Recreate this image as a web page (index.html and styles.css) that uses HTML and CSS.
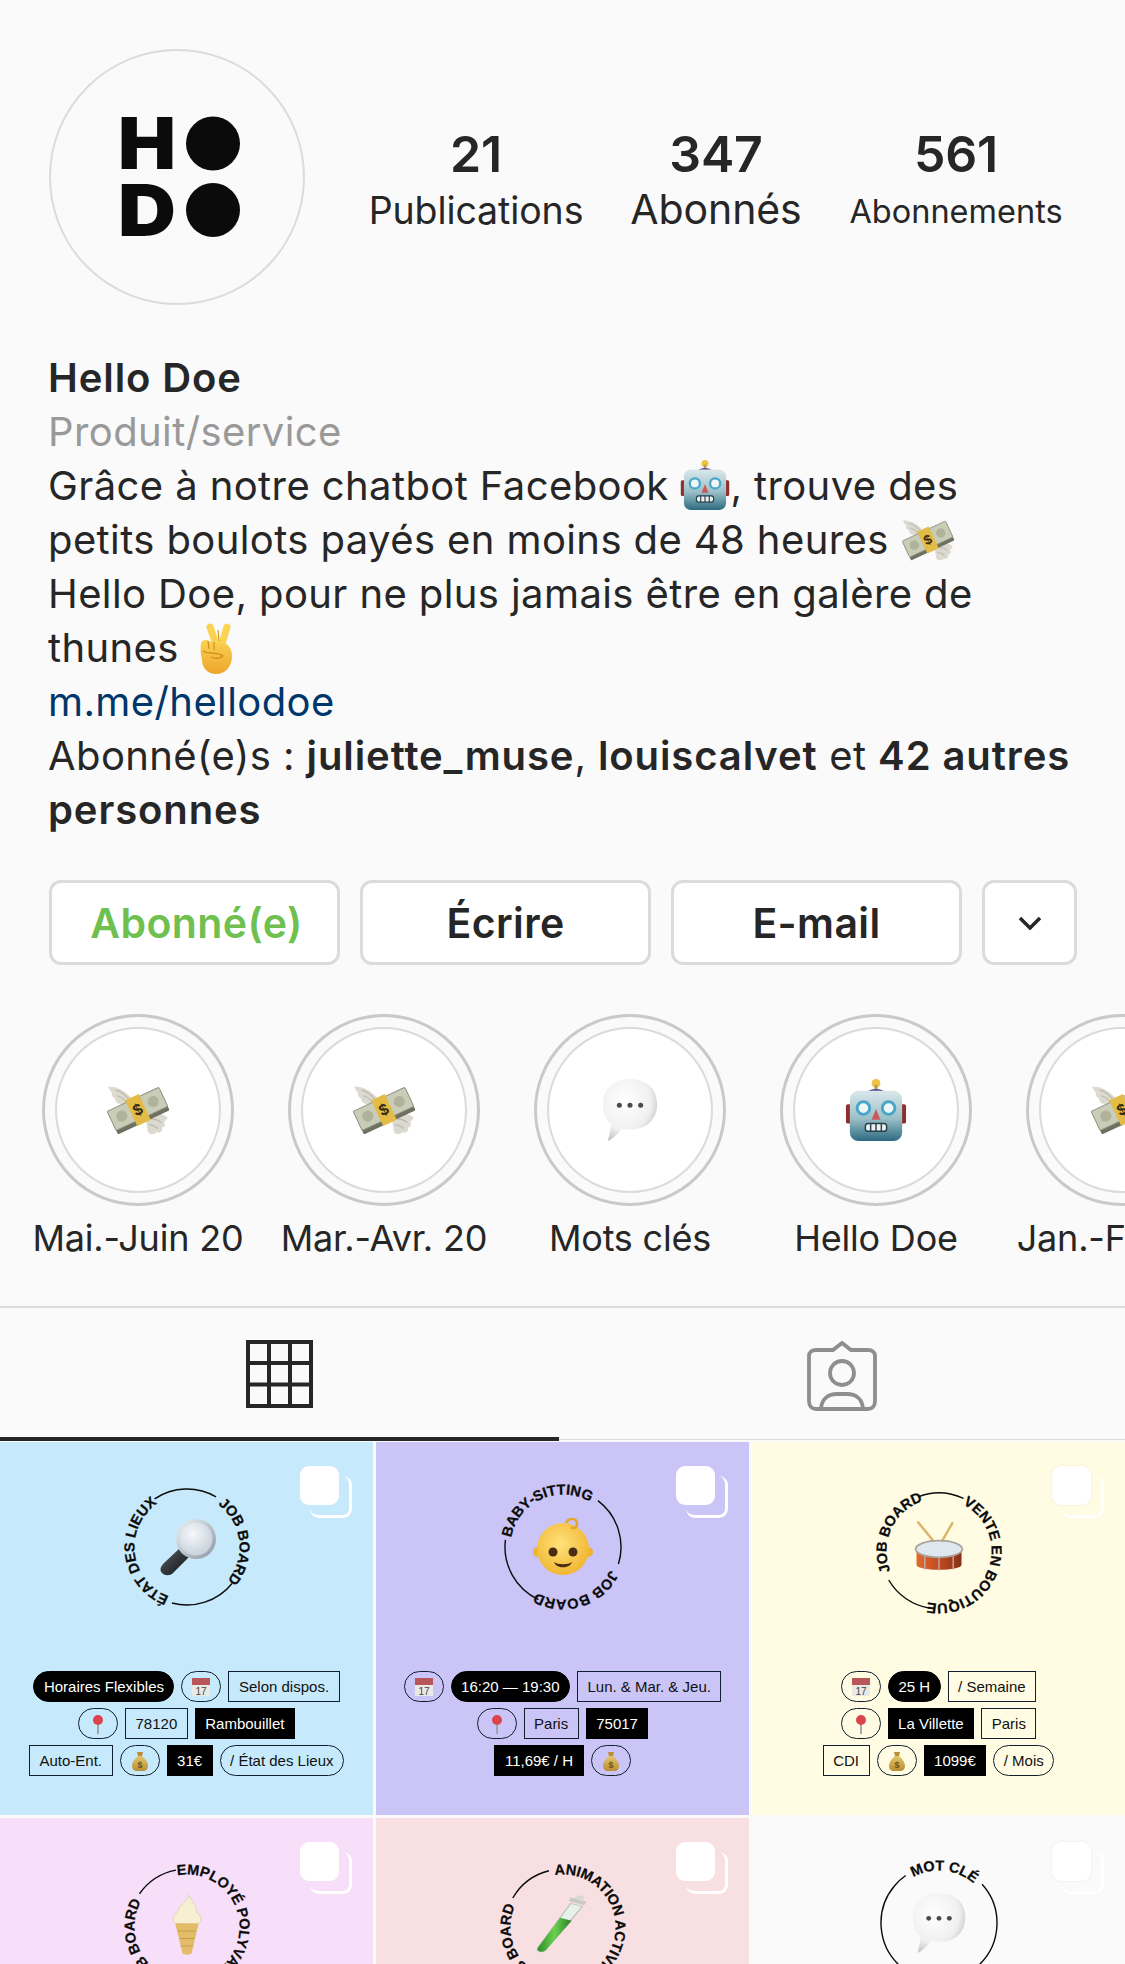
FILE: index.html
```
<!DOCTYPE html>
<html lang="fr">
<head>
<meta charset="utf-8">
<title>Hello Doe</title>
<link rel="stylesheet" href="styles.css">
</head>
<body>
<svg class="sprite" aria-hidden="true">
  <defs>
    <linearGradient id="gRobot" x1="0" y1="0" x2="0" y2="1"><stop offset="0" stop-color="#dbe8eb"/><stop offset=".55" stop-color="#9cc0c8"/><stop offset="1" stop-color="#2b6a80"/></linearGradient>
    <radialGradient id="gBubble" cx=".4" cy=".35" r=".8"><stop offset="0" stop-color="#ffffff"/><stop offset=".6" stop-color="#f0f0f0"/><stop offset="1" stop-color="#adadad"/></radialGradient>
    <radialGradient id="gLens" cx=".4" cy=".35" r=".7"><stop offset="0" stop-color="#f6f8fa"/><stop offset="1" stop-color="#c5d0da"/></radialGradient>
    <linearGradient id="gRim" x1="0" y1="0" x2="1" y2="1"><stop offset="0" stop-color="#eef3f6"/><stop offset="1" stop-color="#8c96a0"/></linearGradient>
    <linearGradient id="gHandle" x1="0" y1="0" x2="1" y2="1"><stop offset="0" stop-color="#5a6068"/><stop offset="1" stop-color="#0d0f12"/></linearGradient>
    <radialGradient id="gBaby" cx=".45" cy=".4" r=".65"><stop offset="0" stop-color="#ffe27a"/><stop offset="1" stop-color="#f0b32e"/></radialGradient>
    <linearGradient id="gDrum" x1="0" y1="0" x2="1" y2="0"><stop offset="0" stop-color="#e06a30"/><stop offset=".5" stop-color="#c24a22"/><stop offset="1" stop-color="#8a2f15"/></linearGradient>
    <linearGradient id="gHand" x1="0" y1="0" x2="0" y2="1"><stop offset="0" stop-color="#fbd252"/><stop offset="1" stop-color="#eda52a"/></linearGradient>
    <linearGradient id="gBag" x1="0" y1="0" x2="0" y2="1"><stop offset="0" stop-color="#e4c56c"/><stop offset="1" stop-color="#b98e35"/></linearGradient>
    <linearGradient id="gTube" x1="0" y1="0" x2="1" y2="0"><stop offset="0" stop-color="#2f8f2a"/><stop offset=".5" stop-color="#6bd04f"/><stop offset="1" stop-color="#2a7f26"/></linearGradient>
    <path id="ct" d="M0,-52.500 A52.500,52.500 0 1 1 -0.01,-52.500"/>
    <path id="cb" d="M0,52.500 A52.500,52.500 0 1 1 0.01,52.500"/>

    <symbol id="money" viewBox="0 0 100 100">
      <path d="M44 38 C36 22 18 12 2 12 C4 18 6 20 8 22 C7 26 9 30 13 31 C13 36 17 40 22 40 C25 46 32 48 38 48Z" fill="#dcdad0"/>
      <path d="M14 18 C22 20 30 26 36 34 M16 27 C22 28 28 33 32 38" stroke="#bdbaac" stroke-width="2" fill="none"/>
      <path d="M62 60 C72 52 86 54 98 62 C96 66 94 68 92 68 C95 73 93 78 89 78 C90 84 86 88 80 86 C76 90 70 90 66 86Z" fill="#dcdad0"/>
      <path d="M70 64 C76 64 82 66 88 70 M68 74 C72 74 78 76 82 80" stroke="#bdbaac" stroke-width="2" fill="none"/>
      <g transform="rotate(-25 50 50)">
        <rect x="4" y="36" width="92" height="36" rx="2" fill="#6e7160"/>
        <rect x="4" y="31" width="92" height="34" rx="2" fill="#c9ccb6" stroke="#8f9280" stroke-width="1.500"/>
        <ellipse cx="22" cy="48" rx="9" ry="9" fill="#b0b39a"/>
        <ellipse cx="78" cy="48" rx="9" ry="9" fill="#b0b39a"/>
        <rect x="38" y="27" width="24" height="46" rx="1" fill="#e3bb45"/>
        <text x="50" y="58" class="glyph money-sign" font-size="26">$</text>
      </g>
    </symbol>

    <symbol id="robot" viewBox="0 0 64 64">
      <circle cx="32" cy="4.500" r="4.500" fill="#efc144"/>
      <rect x="30.500" y="6" width="3" height="5" fill="#b79a52"/>
      <path d="M23 14 C24 9 40 9 41 14Z" fill="#5a4a92"/>
      <rect x="1" y="26" width="6" height="20" rx="2" fill="#8f2d2d"/>
      <rect x="57" y="26" width="6" height="20" rx="2" fill="#8f2d2d"/>
      <rect x="5" y="12" width="54" height="52" rx="9" fill="url(#gRobot)"/>
      <circle cx="19" cy="30" r="6.500" fill="#eef6f8" stroke="#47a7c9" stroke-width="3"/>
      <circle cx="45" cy="30" r="6.500" fill="#eef6f8" stroke="#47a7c9" stroke-width="3"/>
      <path d="M32 31 L36.500 42 L27.500 42Z" fill="#c95a5a"/>
      <rect x="21" y="46" width="22" height="8" rx="3" fill="#eef0f0" stroke="#26414c" stroke-width="1.500"/>
      <path d="M26.500 46v8M32 46v8M37.500 46v8" stroke="#26414c" stroke-width="1.500"/>
    </symbol>

    <symbol id="bubble" viewBox="0 0 64 64">
      <path d="M32 0 C50 0 60 11 60 26 C60 41 50 52 32 52 C29 52 26 51.600 24 51 C20 56 14 62 9 64 C11 58 12 52 12 46 C6 41 4 34 4 26 C4 11 14 0 32 0Z" fill="url(#gBubble)"/>
      <circle cx="21" cy="27" r="2.600" fill="#4a4a4a"/><circle cx="32" cy="27" r="2.600" fill="#4a4a4a"/><circle cx="43" cy="27" r="2.600" fill="#4a4a4a"/>
    </symbol>

    <symbol id="peace" viewBox="0 0 34 51">
      <path d="M11 4 L18 24" stroke="#fbd252" stroke-width="7" stroke-linecap="round"/>
      <path d="M28 4 L22 24" stroke="#fbd252" stroke-width="7" stroke-linecap="round"/>
      <path d="M2 21 C2 17 8 16 10 18 L14 19 L22 19 C28 20 33 24 33 33 C33 44 26 51 17 51 C9 51 3 45 3 37 C2 33 1 26 2 21Z" fill="url(#gHand)"/>
      <path d="M9 18 L10 26 M15 19 L15 27 M4 28 C10 32 18 28 24 33 C20 36 16 36 12 34 M19 7 L20 18" stroke="#cf8d1c" stroke-width="1.100" fill="none"/>
    </symbol>

    <symbol id="lens" viewBox="0 0 60 60">
      <path d="M6 46 L22 31 C24 29 27 29 29 31 L31 33 C33 35 33 38 31 40 L15 56 C12 59 7 59 4 56 C1 53 3 49 6 46Z" fill="url(#gHandle)"/>
      <circle cx="38" cy="22" r="20" fill="url(#gRim)"/>
      <circle cx="38" cy="22" r="16.500" fill="url(#gLens)"/>
    </symbol>

    <symbol id="baby" viewBox="0 0 60 60">
      <circle cx="5" cy="34" r="5" fill="#f0b32e"/><circle cx="55" cy="34" r="5" fill="#f0b32e"/>
      <circle cx="30" cy="31" r="26" fill="url(#gBaby)"/>
      <path d="M33 5 C36 -1 44 0 44 6 C44 10 40 11 38 9" stroke="#e6a62a" stroke-width="2.600" fill="none"/>
      <circle cx="20" cy="34" r="4.500" fill="#4a2d12"/><circle cx="40" cy="34" r="4.500" fill="#4a2d12"/>
      <path d="M21 44 C25 47 35 47 39 44 C37 51 23 51 21 44Z" fill="#4a2d12"/>
    </symbol>

    <symbol id="drum" viewBox="0 0 60 60">
      <path d="M5 1 L27 28 M46 2 L31 28" stroke="#dcb56a" stroke-width="3" stroke-linecap="round"/>
      <path d="M3 34 L3 52 C3 60 57 60 57 52 L57 34Z" fill="url(#gDrum)"/>
      <path d="M13 40v18M30 42v17M47 40v18" stroke="#b9b2aa" stroke-width="1.600"/>
      <ellipse cx="30" cy="33" rx="28" ry="10" fill="#dfe8ee" stroke="#a9a39b" stroke-width="2"/>
    </symbol>

    <symbol id="cal" viewBox="0 0 20 20">
      <rect x="1" y="1" width="18" height="18" fill="#e9e9e6"/>
      <rect x="1" y="1" width="18" height="7" fill="#b8565a"/>
      <text x="10" y="17.500" class="glyph cal-num" font-size="10">17</text>
    </symbol>

    <symbol id="pin" viewBox="0 0 20 20">
      <path d="M10 8v12" stroke="#9aa0a6" stroke-width="1.800"/>
      <circle cx="10" cy="6" r="5" fill="#d9454a"/>
    </symbol>

    <symbol id="bag" viewBox="0 0 20 20">
      <path d="M7 1 L13 1 L12 5 L8 5Z" fill="#b98e35"/>
      <path d="M8 5 L12 5 C16 8 18 12 18 15 C18 18 16 20 13 20 L7 20 C4 20 2 18 2 15 C2 12 4 8 8 5Z" fill="url(#gBag)"/>
      <text x="10" y="16.500" class="glyph bag-num" font-size="9">$</text>
    </symbol>

    <symbol id="cone" viewBox="0 0 40 80" preserveAspectRatio="none">
      <path d="M22 0 C24 8 32 14 30 22 C36 26 37 34 33 38 L7 38 C3 34 4 26 10 22 C10 14 20 10 22 0Z" fill="#f6efd2" stroke="#dcd2a8" stroke-width="1"/>
      <path d="M7 38 L33 38 L25 78 C24 80 16 80 15 78Z" fill="#e2bc68"/>
      <path d="M10 48H30M12 58H28M13 68H27" stroke="#c59d4a" stroke-width="1.500"/>
    </symbol>

    <symbol id="tube" viewBox="0 0 60 100" preserveAspectRatio="none">
      <path d="M12 92 C8 97 2 94 4 88 L38 14 L50 19Z" fill="#e8f0ea" stroke="#b9c6bc" stroke-width="1.500"/>
      <path d="M12 92 C8 97 2 94 4 88 L27 38 L39 43Z" fill="url(#gTube)"/>
      <path d="M36 10 L52 17 L54 11 L38 4Z" fill="#c9c9c4"/>
      <path d="M42 6 L46 0 L52 3 L50 11Z" fill="#d8d8d2"/>
    </symbol>
  </defs>
</svg>

<main class="page">
  <section class="header">
    <div class="avatar">
      <svg class="logo" viewBox="0 0 120 120">
        <text x="-2" y="52" class="logo-letter" textLength="58" lengthAdjust="spacingAndGlyphs">H</text>
        <circle cx="93" cy="26.500" r="27"/>
        <text x="-2" y="119" class="logo-letter" textLength="58" lengthAdjust="spacingAndGlyphs">D</text>
        <circle cx="93" cy="93" r="27"/>
      </svg>
    </div>
    <div class="stats">
      <div class="stat"><b class="num">21</b><span class="lab lab-a">Publications</span></div>
      <div class="stat"><b class="num">347</b><span class="lab lab-b">Abonnés</span></div>
      <div class="stat"><b class="num">561</b><span class="lab lab-c">Abonnements</span></div>
    </div>
  </section>

  <section class="bio">
    <div class="strong">Hello Doe</div>
    <div class="muted">Produit/service</div>
    <div>Grâce à notre chatbot Facebook <svg class="emo emo-robot"><use href="#robot"/></svg>, trouve des<br>petits boulots payés en moins de 48 heures <svg class="emo emo-money"><use href="#money"/></svg><br>Hello Doe, pour ne plus jamais être en galère de thunes <svg class="emo emo-peace"><use href="#peace"/></svg></div>
    <div class="link">m.me/hellodoe</div>
    <div>Abonné(e)s : <span class="strong">juliette_muse</span>, <span class="strong">louiscalvet</span> et <span class="strong">42 autres personnes</span></div>
  </section>

  <section class="actions">
    <button class="btn btn-follow">Abonné(e)</button>
    <button class="btn">Écrire</button>
    <button class="btn">E-mail</button>
    <button class="btn btn-more" aria-label="Plus">
      <svg class="chev" viewBox="0 0 24 14"><path d="M2 2 L12 12 L22 2"/></svg>
    </button>
  </section>

  <section class="stories">
    <div class="story"><div class="ring"><div class="disc"><svg class="story-ico"><use href="#money"/></svg></div></div><span class="story-name">Mai.-Juin 20</span></div>
    <div class="story"><div class="ring"><div class="disc"><svg class="story-ico"><use href="#money"/></svg></div></div><span class="story-name">Mar.-Avr. 20</span></div>
    <div class="story"><div class="ring"><div class="disc"><svg class="story-ico"><use href="#bubble"/></svg></div></div><span class="story-name">Mots clés</span></div>
    <div class="story"><div class="ring"><div class="disc"><svg class="story-ico"><use href="#robot"/></svg></div></div><span class="story-name">Hello Doe</span></div>
    <div class="story"><div class="ring"><div class="disc"><svg class="story-ico"><use href="#money"/></svg></div></div><span class="story-name">Jan.-Fév. 20</span></div>
  </section>

  <nav class="tabs">
    <div class="tab tab-on">
      <svg class="tab-ico-grid" viewBox="0 0 67 68"><path d="M2 2H65V66H2ZM23 2V66M44 2V66M2 23H65M2 44.500H65"/></svg>
    </div>
    <div class="tab">
      <svg class="tab-ico-tag" viewBox="0 0 70 70"><path d="M9 9H26L35 2L44 9H61C65 9 68 11 68 15V60C68 65 65 68 61 68H9C5 68 2 65 2 60V15C2 11 5 9 9 9Z"/><circle cx="35" cy="32" r="12"/><path d="M14 67C15 58 21 53 30 53H40C49 53 55 58 56 67"/></svg>
    </div>
  </nav>

  <section class="feed">
    <article class="tile t-blue">
      <span class="multi"></span>
      <svg class="seal" viewBox="-75 -75 150 150">
        <circle class="seal-line" r="58" pathLength="360" stroke-dasharray="64 360" transform="rotate(-124)"/>
        <circle class="seal-line" r="58" pathLength="360" stroke-dasharray="66 360" transform="rotate(39)"/>
        <text class="seal-text"><textPath href="#ct" startOffset="10%">JOB BOARD</textPath></text>
        <text class="seal-text"><textPath href="#ct" startOffset="55.500%">ÉTAT DES LIEUX</textPath></text>
        <use href="#lens" x="-29" y="-30" width="60" height="60"/>
      </svg>
      <div class="chips">
        <div class="row"><span class="chip pill ink">Horaires Flexibles</span><span class="chip pill ico"><svg class="mini"><use href="#cal"/></svg></span><span class="chip">Selon dispos.</span></div>
        <div class="row"><span class="chip pill ico"><svg class="mini"><use href="#pin"/></svg></span><span class="chip">78120</span><span class="chip ink">Rambouillet</span></div>
        <div class="row"><span class="chip">Auto-Ent.</span><span class="chip pill ico"><svg class="mini"><use href="#bag"/></svg></span><span class="chip ink">31€</span><span class="chip pill">/ État des Lieux</span></div>
      </div>
    </article>

    <article class="tile t-violet">
      <span class="multi"></span>
      <svg class="seal" viewBox="-75 -75 150 150">
        <circle class="seal-line" r="58" pathLength="360" stroke-dasharray="70 360" transform="rotate(-53)"/>
        <circle class="seal-line" r="58" pathLength="360" stroke-dasharray="72 360" transform="rotate(115)"/>
        <text class="seal-text"><textPath href="#cb" startOffset="27.800%">BABY-SITTING</textPath></text>
        <text class="seal-text"><textPath href="#ct" startOffset="32.200%">JOB BOARD</textPath></text>
        <use href="#baby" x="-30" y="-29" width="60" height="60"/>
      </svg>
      <div class="chips">
        <div class="row"><span class="chip pill ico"><svg class="mini"><use href="#cal"/></svg></span><span class="chip pill ink">16:20 — 19:30</span><span class="chip">Lun. &amp; Mar. &amp; Jeu.</span></div>
        <div class="row"><span class="chip pill ico"><svg class="mini"><use href="#pin"/></svg></span><span class="chip">Paris</span><span class="chip ink">75017</span></div>
        <div class="row"><span class="chip ink">11,69€ / H</span><span class="chip pill ico"><svg class="mini"><use href="#bag"/></svg></span></div>
      </div>
    </article>

    <article class="tile t-cream">
      <span class="multi multi-soft"></span>
      <svg class="seal seal-low" viewBox="-75 -75 150 150">
        <circle class="seal-line" r="58" pathLength="360" stroke-dasharray="46 360" transform="rotate(-111)"/>
        <circle class="seal-line" r="58" pathLength="360" stroke-dasharray="51 360" transform="rotate(99)"/>
        <text class="seal-text"><textPath href="#ct" startOffset="7.500%">VENTE EN BOUTIQUE</textPath></text>
        <text class="seal-text"><textPath href="#ct" startOffset="68.800%">JOB BOARD</textPath></text>
        <use href="#drum" x="-25" y="-32" width="50" height="55"/>
      </svg>
      <div class="chips">
        <div class="row"><span class="chip pill ico"><svg class="mini"><use href="#cal"/></svg></span><span class="chip pill ink">25 H</span><span class="chip">/ Semaine</span></div>
        <div class="row"><span class="chip pill ico"><svg class="mini"><use href="#pin"/></svg></span><span class="chip ink">La Villette</span><span class="chip">Paris</span></div>
        <div class="row"><span class="chip">CDI</span><span class="chip pill ico"><svg class="mini"><use href="#bag"/></svg></span><span class="chip ink">1099€</span><span class="chip pill">/ Mois</span></div>
      </div>
    </article>

    <article class="tile t-pink">
      <span class="multi"></span>
      <svg class="seal seal-low" viewBox="-75 -75 150 150">
        <circle class="seal-line" r="58" pathLength="360" stroke-dasharray="44 360" transform="rotate(-145)"/>
        <text class="seal-text"><textPath href="#cb" startOffset="47%">EMPLOYÉ POLYVALENT</textPath></text>
        <text class="seal-text"><textPath href="#ct" startOffset="57%">JOB BOARD</textPath></text>
        <use href="#cone" x="-18" y="-32" width="36" height="60"/>
      </svg>
    </article>

    <article class="tile t-rose">
      <span class="multi"></span>
      <svg class="seal seal-low" viewBox="-75 -75 150 150">
        <circle class="seal-line" r="58" pathLength="360" stroke-dasharray="46 360" transform="rotate(-150)"/>
        <text class="seal-text"><textPath href="#cb" startOffset="47.500%">ANIMATION ACTIVITÉS</textPath></text>
        <text class="seal-text"><textPath href="#ct" startOffset="55.500%">JOB BOARD</textPath></text>
        <use href="#tube" x="-29" y="-32" width="58" height="60"/>
      </svg>
    </article>

    <article class="tile t-white">
      <span class="multi multi-soft"></span>
      <svg class="seal" viewBox="-75 -75 150 150">
        <circle class="seal-line" r="58" pathLength="360" stroke-dasharray="130 360" transform="rotate(-42)"/>
        <circle class="seal-line" r="58" pathLength="360" stroke-dasharray="105 360" transform="rotate(130)"/>
        <text class="seal-text"><textPath href="#cb" startOffset="41.800%">MOT CLÉ</textPath></text>
        <use href="#bubble" x="-30" y="-30" width="60" height="60"/>
      </svg>
    </article>
  </section>
</main>
</body>
</html>
```

FILE: styles.css
```
* { box-sizing: border-box; }
html, body { margin: 0; height: 1964px; overflow: hidden; background: #fafafa; }
body { font-family: Inter, "Noto Sans", sans-serif; color: #262626; }
.sprite { position: absolute; width: 0; height: 0; }
.page { width: 1125px; height: 1964px; overflow: hidden; }

.header { display: flex; align-items: center; padding: 49px 49px 0; }
.avatar { flex: none; width: 256px; height: 256px; border-radius: 50%; border: 2px solid #dbdbdb; display: flex; align-items: center; justify-content: center; }
.logo { width: 120px; height: 120px; margin-left: 6px; overflow: visible; }
.logo-letter { font-family: Inter, sans-serif; font-weight: 900; font-size: 71px; fill: #0b0b0b; }
.logo circle { fill: #0b0b0b; }
.stats { display: flex; margin-left: 51px; padding-top: 10px; }
.stat { width: 240px; display: flex; flex-direction: column; align-items: center; }
.num { font-size: 50px; font-weight: 600; line-height: 56px; letter-spacing: -.2px; }
.lab { line-height: 52px; height: 52px; white-space: nowrap; letter-spacing: -.1px; }
.lab-a { font-size: 37.500px; margin-top: 3px; }
.lab-b { font-size: 41px; margin-top: 1px; }
.lab-c { font-size: 32.500px; margin-top: 4px; letter-spacing: 0; }

.bio { margin-top: 46px; padding: 0 40px 0 48px; font-size: 40px; line-height: 54px; letter-spacing: .4px; }
.strong { font-weight: 600; letter-spacing: .9px; }
.muted { color: #999; letter-spacing: .4px; }
.link { color: #00376b; }
.emo { display: inline-block; vertical-align: middle; }
.emo-robot { width: 50px; height: 50px; margin-top: -8px; }
.emo-money { width: 56px; height: 52px; margin-top: -6px; }
.emo-peace { width: 34px; height: 51px; margin: -6px 0 0 8px; }

.actions { display: flex; gap: 20px; margin-top: 43px; padding: 0 49px; }
.btn { width: 291px; height: 85px; flex: none; border: 3px solid #dbdbdb; border-radius: 12px; background: #fff; font-family: inherit; font-size: 41px; font-weight: 600; color: #262626; padding: 0; letter-spacing: .4px; }
.btn-follow { color: #70c050; padding-left: 4px; }
.btn-more { width: 95px; display: flex; align-items: center; justify-content: center; }
.chev { width: 24px; height: 14px; fill: none; stroke: #262626; stroke-width: 3.500; }

.stories { display: flex; gap: 54px; margin-top: 49px; padding-left: 42px; width: 1125px; overflow: hidden; }
.story { flex: none; width: 192px; display: flex; flex-direction: column; align-items: center; }
.ring { width: 192px; height: 192px; border-radius: 50%; border: 3px solid #c9c9c9; display: flex; align-items: center; justify-content: center; }
.disc { width: 166px; height: 166px; border-radius: 50%; border: 2px solid #dbdbdb; background: #fff; display: flex; align-items: center; justify-content: center; }
.story-ico { width: 62px; height: 62px; }
.story-name { margin-top: 10px; font-size: 36px; line-height: 44px; white-space: nowrap; letter-spacing: -.2px; }

.tabs { display: flex; margin-top: 46px; height: 134px; border-top: 2px solid #dbdbdb; border-bottom: 1px solid #dbdbdb; }
.tab { display: flex; align-items: center; justify-content: center; flex: 1; height: 133px; padding-top: 2px; }
.tab-on { flex: none; width: 559px; border-bottom: 4px solid #262626; }
.tab-ico-grid { width: 67px; height: 68px; fill: none; stroke: #262626; stroke-width: 4; }
.tab-ico-tag { width: 70px; height: 70px; fill: none; stroke: #8e8e8e; stroke-width: 3.800; }

.feed { display: grid; grid-template-columns: repeat(3, 373px); grid-auto-rows: 373px; gap: 3px; padding-top: 2px; }
.tile { position: relative; display: flex; flex-direction: column; align-items: center; overflow: hidden; padding-top: 30px; }
.t-blue { background: #c6e9fb; }
.t-violet { background: #cac5f6; }
.t-cream { background: #fffce3; }
.t-pink { background: #f7dff9; }
.t-rose { background: #f8dfe1; }
.t-white { background: #fafafa; }

.multi { position: absolute; top: 24px; right: 34px; width: 39px; height: 39px; border-radius: 9px; background: #fff; }
.multi::after { content: ""; position: absolute; left: 10px; top: 10px; width: 39px; height: 39px; border-right: 3px solid #fff; border-bottom: 3px solid #fff; border-radius: 9px; }
.multi-soft { box-shadow: 0 0 3px rgba(0,0,0,.08); }

.seal { width: 150px; height: 150px; flex: none; overflow: visible; }
.seal-low { margin-top: 4px; margin-bottom: -4px; }
.seal-line { fill: none; stroke: #0b0b0b; stroke-width: 1.400; }
.seal-text { font-family: "Liberation Sans", Arial, sans-serif; font-weight: 700; font-size: 14.500px; letter-spacing: -.1px; fill: #0b0b0b; stroke: #0b0b0b; stroke-width: .25px; }

.chips { display: flex; flex-direction: column; gap: 6px; margin-top: 49px; align-items: center; }
.row { display: flex; gap: 7px; justify-content: center; }
.chip { display: flex; align-items: center; justify-content: center; height: 31px; padding: 0 9.500px; border: 1.500px solid #10202c; font-family: "Liberation Sans", Arial, sans-serif; font-size: 15px; color: #111; white-space: nowrap; }
.pill { border-radius: 16px; }
.ink { background: #000; border-color: #000; color: #fff; }
.ico { width: 40px; padding: 0; }
.mini { width: 20px; height: 20px; }
.glyph { font-family: "Liberation Sans", Arial, sans-serif; font-weight: 700; text-anchor: middle; fill: #8a6a1c; }
.money-sign { fill: #2e2a14; }
.cal-num { font-weight: 400; fill: #444; }
.bag-num { fill: #6b5217; }
```
